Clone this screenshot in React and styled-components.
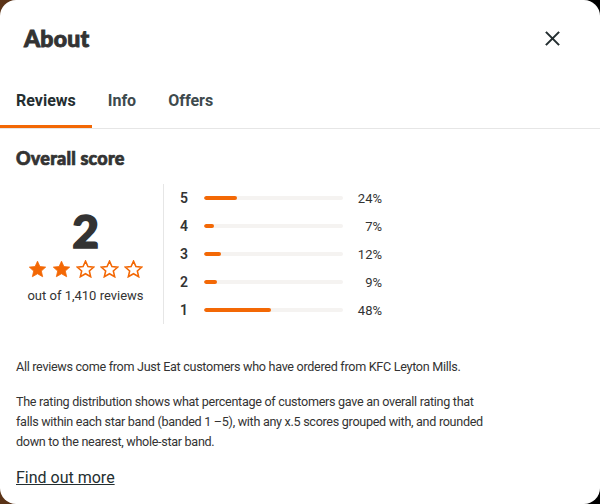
import React from 'react'
import styled, { createGlobalStyle } from 'styled-components'

const GlobalStyle = createGlobalStyle`
  html, body {
    margin: 0;
    padding: 0;
    background: linear-gradient(90deg, #5b3317 0%, #1b120c 60%, #000 100%);
  }
  body {
    font-family: Roboto, "Noto Sans", sans-serif;
    color: #242e30;
  }
`

const distribution = [
  { star: 5, pct: 24 },
  { star: 4, pct: 7 },
  { star: 3, pct: 12 },
  { star: 2, pct: 9 },
  { star: 1, pct: 48 },
]

function Star({ filled }) {
  return (
    <svg width="19" height="18" viewBox="0 0 24 23" aria-hidden="true">
      <path
        d="M12 1.5l3.1 6.9 7.4.7-5.6 5 1.7 7.3L12 17.6l-6.6 3.8 1.7-7.3-5.6-5 7.4-.7z"
        fill={filled ? '#f36805' : 'none'}
        stroke="#f36805"
        strokeWidth={filled ? 1 : 2}
        strokeLinejoin="miter"
      />
    </svg>
  )
}

export default function App() {
  return (
    <>
      <GlobalStyle />
      <Modal>
        <Header>
          <Title>About</Title>
          <CloseButton type="button" aria-label="Close">
            <svg width="17" height="17" viewBox="0 0 18 18">
              <path d="M2 2l14 14M16 2L2 16" stroke="#242e30" strokeWidth="2.2" />
            </svg>
          </CloseButton>
        </Header>
        <Tabs>
          <Tab active>Reviews</Tab>
          <Tab>Info</Tab>
          <Tab>Offers</Tab>
        </Tabs>
        <Body>
          <SectionTitle>Overall score</SectionTitle>
          <ScoreRow>
            <Summary>
              <BigScore>2</BigScore>
              <Stars>
                {[1, 2, 3, 4, 5].map((i) => (
                  <Star key={i} filled={i <= 2} />
                ))}
              </Stars>
              <Count>out of 1,410 reviews</Count>
            </Summary>
            <Bars>
              {distribution.map((d) => (
                <BarRow key={d.star}>
                  <StarNum>{d.star}</StarNum>
                  <Track>
                    <Fill style={{ width: `${d.pct}%` }} />
                  </Track>
                  <Pct>{d.pct}%</Pct>
                </BarRow>
              ))}
            </Bars>
          </ScoreRow>
          <Text>
            All reviews come from Just Eat customers who have ordered from KFC
            Leyton Mills.
          </Text>
          <Text>
            The rating distribution shows what percentage of customers gave an
            overall rating that falls within each star band (banded 1 –5), with
            any x.5 scores grouped with, and rounded down to the nearest,
            whole-star band.
          </Text>
          <MoreLink href="#">Find out more</MoreLink>
        </Body>
      </Modal>
    </>
  )
}

const Modal = styled.div`
  width: 600px;
  height: 504px;
  background: #fff;
  border-radius: 16px;
  overflow: hidden;
  box-sizing: border-box;
`

const Header = styled.div`
  display: flex;
  align-items: center;
  justify-content: space-between;
  padding: 20px 39px 0 24px;
  height: 56px;
  box-sizing: border-box;
`

const Title = styled.h1`
  margin: 0;
  font-family: Lato, sans-serif;
  font-weight: 900;
  font-size: 23px;
  line-height: 30px;
  letter-spacing: 0.2px;
  color: #333;
  -webkit-text-stroke: 0.9px #333;
`

const CloseButton = styled.button`
  border: none;
  background: none;
  padding: 0;
  display: flex;
  cursor: pointer;
`

const Tabs = styled.div`
  display: flex;
  margin-top: 21px;
  border-bottom: 1px solid #e6e6e6;
`

const Tab = styled.div`
  font-family: Roboto, sans-serif;
  font-size: 16px;
  font-weight: 700;
  line-height: 20px;
  padding: 14px 16px 17px;
  color: ${(p) => (p.active ? '#242e30' : '#3e4a4d')};
  box-shadow: ${(p) => (p.active ? 'inset 0 -3px 0 #f36805' : 'none')};
`

const Body = styled.div`
  padding: 17px 16px 0;
`

const SectionTitle = styled.h2`
  margin: 0;
  font-family: Lato, sans-serif;
  font-weight: 900;
  font-size: 18px;
  line-height: 24px;
  letter-spacing: 0.2px;
  color: #333;
  -webkit-text-stroke: 0.7px #333;
`

const ScoreRow = styled.div`
  display: flex;
  margin-top: 14px;
`

const Summary = styled.div`
  width: 139px;
  padding-right: 8px;
  border-right: 1px solid #e6e6e6;
  display: flex;
  flex-direction: column;
  align-items: center;
  justify-content: center;
`

const BigScore = styled.div`
  font-family: Lato, sans-serif;
  font-weight: 900;
  font-size: 46px;
  line-height: 46px;
  color: #333;
  -webkit-text-stroke: 1.6px #333;
  margin-top: 2px;
`

const Stars = styled.div`
  display: flex;
  gap: 5px;
  margin-top: 6px;
`

const Count = styled.div`
  font-size: 13px;
  margin-top: 10px;
  color: #333;
`

const Bars = styled.div`
  padding-left: 16px;
  display: flex;
  flex-direction: column;
`

const BarRow = styled.div`
  display: flex;
  align-items: center;
  height: 28px;
`

const StarNum = styled.div`
  width: 24px;
  font-size: 14px;
  font-weight: 600;
  color: #333;
`

const Track = styled.div`
  width: 139px;
  height: 4px;
  border-radius: 2px;
  background: #f5f3f1;
  overflow: hidden;
`

const Fill = styled.div`
  height: 100%;
  border-radius: 2px;
  background: #f36805;
`

const Pct = styled.div`
  width: 39px;
  text-align: right;
  font-size: 13px;
  color: #333;
`

const Text = styled.p`
  max-width: 480px;
  margin: 33px 0 0;
  font-size: 12.6px;
  letter-spacing: -0.3px;
  line-height: 20px;
  color: #333;
  & + & {
    margin-top: 15px;
  }
`

const MoreLink = styled.a`
  display: inline-block;
  margin-top: 16px;
  font-size: 16px;
  color: #242e30;
  text-decoration: underline;
`
